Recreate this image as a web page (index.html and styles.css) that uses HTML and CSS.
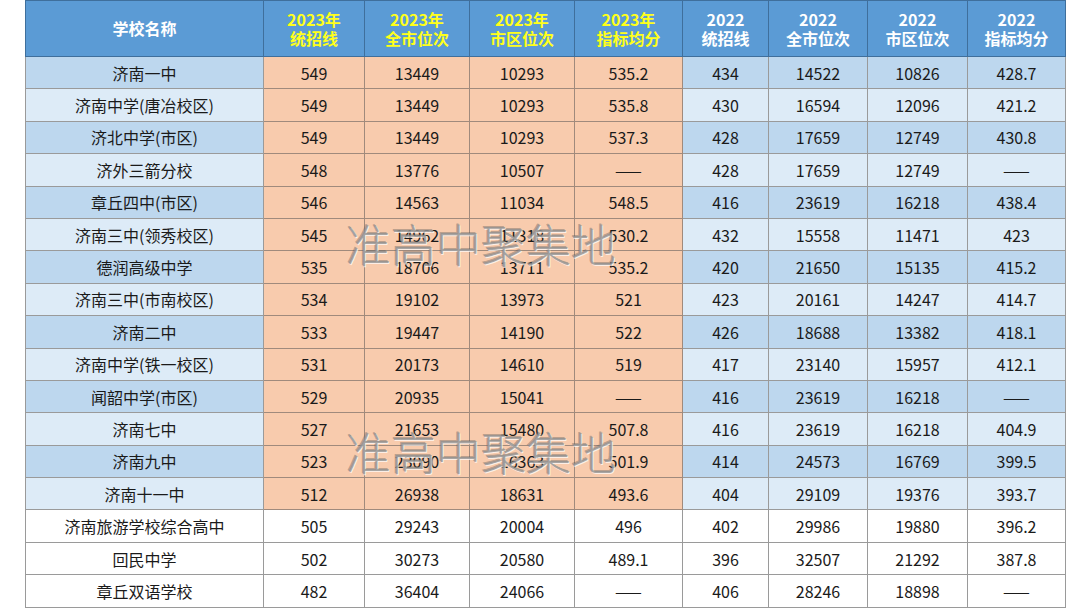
FILE: index.html
```html
<!DOCTYPE html>
<html lang="zh">
<head>
<meta charset="utf-8">
<title>济南高中录取分数线</title>
<link rel="stylesheet" href="styles.css">
</head>
<body>
<div class="page">
<table class="scores">
<colgroup>
<col class="c-name"><col class="c1"><col class="c2"><col class="c3"><col class="c4"><col class="c5"><col class="c6"><col class="c7"><col class="c8">
</colgroup>
<thead>
<tr>
<th>学校名称</th>
<th class="y23">2023年<br>统招线</th>
<th class="y23">2023年<br>全市位次</th>
<th class="y23">2023年<br>市区位次</th>
<th class="y23">2023年<br>指标均分</th>
<th>2022<br>统招线</th>
<th>2022<br>全市位次</th>
<th>2022<br>市区位次</th>
<th>2022<br>指标均分</th>
</tr>
</thead>
<tbody>
<tr class="dark"><td>济南一中</td><td class="o">549</td><td class="o">13449</td><td class="o">10293</td><td class="o">535.2</td><td>434</td><td>14522</td><td>10826</td><td>428.7</td></tr>
<tr class="light"><td>济南中学(唐冶校区)</td><td class="o">549</td><td class="o">13449</td><td class="o">10293</td><td class="o">535.8</td><td>430</td><td>16594</td><td>12096</td><td>421.2</td></tr>
<tr class="dark"><td>济北中学(市区)</td><td class="o">549</td><td class="o">13449</td><td class="o">10293</td><td class="o">537.3</td><td>428</td><td>17659</td><td>12749</td><td>430.8</td></tr>
<tr class="light"><td>济外三箭分校</td><td class="o">548</td><td class="o">13776</td><td class="o">10507</td><td class="o">——</td><td>428</td><td>17659</td><td>12749</td><td>——</td></tr>
<tr class="dark"><td>章丘四中(市区)</td><td class="o">546</td><td class="o">14563</td><td class="o">11034</td><td class="o">548.5</td><td>416</td><td>23619</td><td>16218</td><td>438.4</td></tr>
<tr class="light"><td>济南三中(领秀校区)</td><td class="o">545</td><td class="o">14962</td><td class="o">11318</td><td class="o">530.2</td><td>432</td><td>15558</td><td>11471</td><td>423</td></tr>
<tr class="dark"><td>德润高级中学</td><td class="o">535</td><td class="o">18706</td><td class="o">13711</td><td class="o">535.2</td><td>420</td><td>21650</td><td>15135</td><td>415.2</td></tr>
<tr class="light"><td>济南三中(市南校区)</td><td class="o">534</td><td class="o">19102</td><td class="o">13973</td><td class="o">521</td><td>423</td><td>20161</td><td>14247</td><td>414.7</td></tr>
<tr class="dark"><td>济南二中</td><td class="o">533</td><td class="o">19447</td><td class="o">14190</td><td class="o">522</td><td>426</td><td>18688</td><td>13382</td><td>418.1</td></tr>
<tr class="light"><td>济南中学(铁一校区)</td><td class="o">531</td><td class="o">20173</td><td class="o">14610</td><td class="o">519</td><td>417</td><td>23140</td><td>15957</td><td>412.1</td></tr>
<tr class="dark"><td>闻韶中学(市区)</td><td class="o">529</td><td class="o">20935</td><td class="o">15041</td><td class="o">——</td><td>416</td><td>23619</td><td>16218</td><td>——</td></tr>
<tr class="light"><td>济南七中</td><td class="o">527</td><td class="o">21653</td><td class="o">15480</td><td class="o">507.8</td><td>416</td><td>23619</td><td>16218</td><td>404.9</td></tr>
<tr class="dark"><td>济南九中</td><td class="o">523</td><td class="o">23090</td><td class="o">16363</td><td class="o">501.9</td><td>414</td><td>24573</td><td>16769</td><td>399.5</td></tr>
<tr class="light"><td>济南十一中</td><td class="o">512</td><td class="o">26938</td><td class="o">18631</td><td class="o">493.6</td><td>404</td><td>29109</td><td>19376</td><td>393.7</td></tr>
<tr class="white"><td>济南旅游学校综合高中</td><td>505</td><td>29243</td><td>20004</td><td>496</td><td>402</td><td>29986</td><td>19880</td><td>396.2</td></tr>
<tr class="white"><td>回民中学</td><td>502</td><td>30273</td><td>20580</td><td>489.1</td><td>396</td><td>32507</td><td>21292</td><td>387.8</td></tr>
<tr class="white"><td>章丘双语学校</td><td>482</td><td>36404</td><td>24066</td><td>——</td><td>406</td><td>28246</td><td>18898</td><td>——</td></tr>
</tbody>
</table>
<div class="watermark wm1">准高中聚集地</div>
<div class="watermark wm2">准高中聚集地</div>
</div>
</body>
</html>
```

FILE: styles.css
```css
html, body {
  margin: 0;
  padding: 0;
  background: #ffffff;
}
.page {
  position: relative;
  width: 1080px;
  height: 608px;
  overflow: hidden;
  padding-left: 25px;
  box-sizing: border-box;
}
.scores {
  border-collapse: collapse;
  table-layout: fixed;
  width: 1041px;
  font-family: "Noto Sans CJK SC", "Noto Sans", sans-serif;
  color: #1a1a1a;
}
.c-name { width: 238px; }
.c1 { width: 101px; }
.c2 { width: 105px; }
.c3 { width: 105px; }
.c4 { width: 108px; }
.c5 { width: 86px; }
.c6 { width: 99px; }
.c7 { width: 100px; }
.c8 { width: 98px; }

.scores th {
  height: 55px;
  background: #5b9bd5;
  color: #ffffff;
  font-size: 16px;
  font-weight: 700;
  line-height: 19px;
  text-align: center;
  border: 1px solid #3f6f9c;
  padding: 0;
}
.scores th.y23 { color: #ffff1a; }
.scores td {
  height: 31.4px;
  padding: 0;
  text-align: center;
  font-size: 16px;
  border: 1px solid #9a9a9a;
  white-space: nowrap;
}
.dark td { background: #bdd7ee; }
.light td { background: #ddebf7; }
.white td { background: #ffffff; }
.scores td.o { background: #f8cbad; border-color: #a08a7c; }

.watermark {
  position: absolute;
  left: 346px;
  font-family: "Noto Sans CJK SC", sans-serif;
  font-weight: 300;
  font-size: 45px;
  line-height: 45px;
  color: rgba(145, 145, 145, 0.78);
  text-shadow: 1px 1px 0 rgba(255, 255, 255, 0.7), -1px -1px 0 rgba(90, 90, 90, 0.4);
  pointer-events: none;
  white-space: nowrap;
}
.wm1 { top: 221px; }
.wm2 { top: 429px; }
```
